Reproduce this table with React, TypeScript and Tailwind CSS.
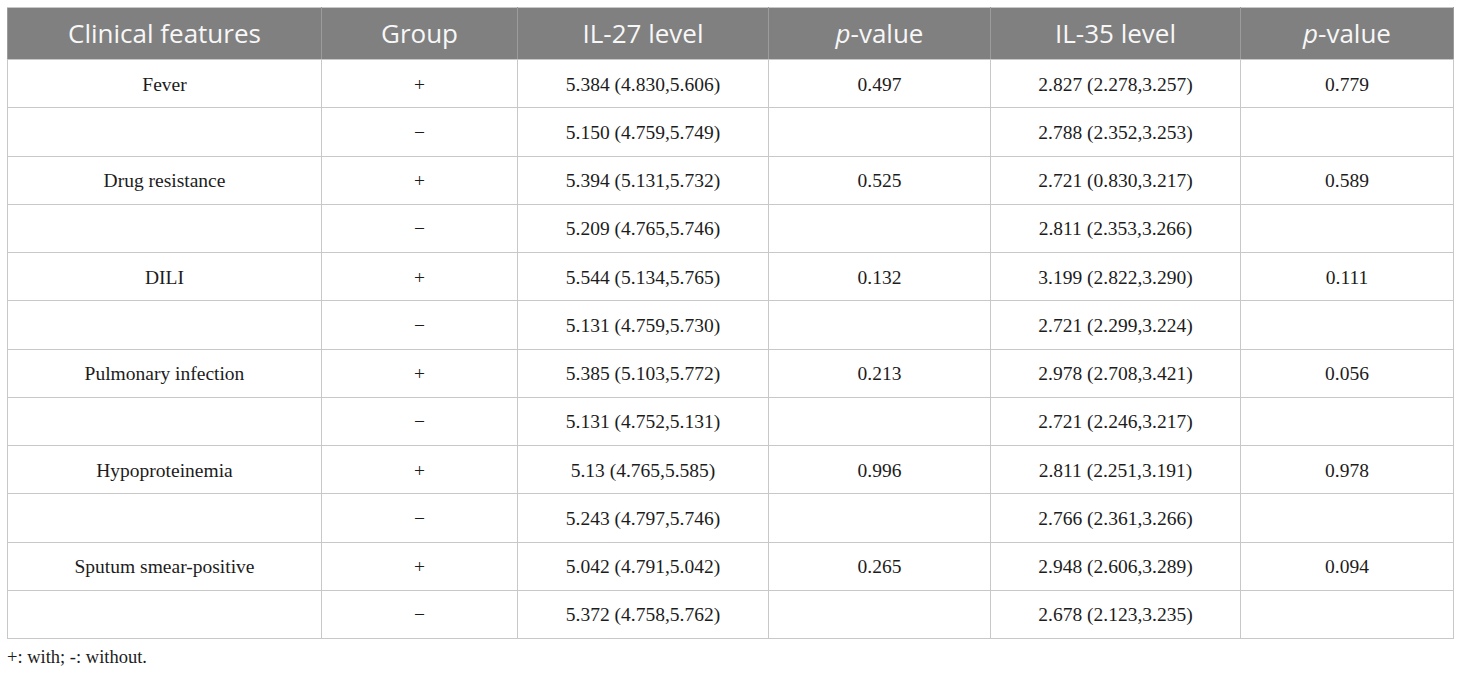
import React from "react";

const data: { f: string; plus: [string, string, string, string]; minus: [string, string] }[] = [
  { f: "Fever", plus: ["5.384 (4.830,5.606)", "0.497", "2.827 (2.278,3.257)", "0.779"], minus: ["5.150 (4.759,5.749)", "2.788 (2.352,3.253)"] },
  { f: "Drug resistance", plus: ["5.394 (5.131,5.732)", "0.525", "2.721 (0.830,3.217)", "0.589"], minus: ["5.209 (4.765,5.746)", "2.811 (2.353,3.266)"] },
  { f: "DILI", plus: ["5.544 (5.134,5.765)", "0.132", "3.199 (2.822,3.290)", "0.111"], minus: ["5.131 (4.759,5.730)", "2.721 (2.299,3.224)"] },
  { f: "Pulmonary infection", plus: ["5.385 (5.103,5.772)", "0.213", "2.978 (2.708,3.421)", "0.056"], minus: ["5.131 (4.752,5.131)", "2.721 (2.246,3.217)"] },
  { f: "Hypoproteinemia", plus: ["5.13 (4.765,5.585)", "0.996", "2.811 (2.251,3.191)", "0.978"], minus: ["5.243 (4.797,5.746)", "2.766 (2.361,3.266)"] },
  { f: "Sputum smear-positive", plus: ["5.042 (4.791,5.042)", "0.265", "2.948 (2.606,3.289)", "0.094"], minus: ["5.372 (4.758,5.762)", "2.678 (2.123,3.235)"] },
];

const td = "border border-[#c8c8c8] h-[48.25px] p-0 pt-[1px] text-center align-middle";

export default function App() {
  return (
    <div className="bg-white w-[1460px] h-[674px] pt-[7px] pl-[7px]" style={{ fontFamily: '"Liberation Serif", serif' }}>
      <table className="border-collapse table-fixed w-[1446px] text-[19.5px] text-[#1c1c1c]">
        <colgroup>
          <col className="w-[314px]" />
          <col className="w-[196px]" />
          <col className="w-[251px]" />
          <col className="w-[222px]" />
          <col className="w-[250px]" />
          <col className="w-[213px]" />
        </colgroup>
        <thead>
          <tr className="bg-[#808080] text-[#f7f7f7] text-[26px] font-normal" style={{ fontFamily: '"Open Sans", sans-serif' }}>
            {[
              <>Clinical features</>,
              <>Group</>,
              <>IL-27 level</>,
              <><i>p</i>-value</>,
              <>IL-35 level</>,
              <><i>p</i>-value</>,
            ].map((c, i) => (
              <th key={i} className="h-[52px] p-0 pb-[1px] font-normal text-center align-middle border-t border-t-[#c8c8c8] border-x border-x-[#9c9c9c] border-b border-b-[#c8c8c8] leading-none">
                {c}
              </th>
            ))}
          </tr>
        </thead>
        <tbody>
          {data.map((r) => (
            <React.Fragment key={r.f}>
              <tr>
                <td className={td}>{r.f}</td>
                <td className={td}>+</td>
                <td className={td}>{r.plus[0]}</td>
                <td className={td}>{r.plus[1]}</td>
                <td className={td}>{r.plus[2]}</td>
                <td className={td}>{r.plus[3]}</td>
              </tr>
              <tr>
                <td className={td}></td>
                <td className={td}>−</td>
                <td className={td}>{r.minus[0]}</td>
                <td className={td}></td>
                <td className={td}>{r.minus[1]}</td>
                <td className={td}></td>
              </tr>
            </React.Fragment>
          ))}
        </tbody>
      </table>
      <div className="mt-[6px] text-[18.5px] leading-[25px] text-[#1c1c1c]">+: with; -: without.</div>
    </div>
  );
}
